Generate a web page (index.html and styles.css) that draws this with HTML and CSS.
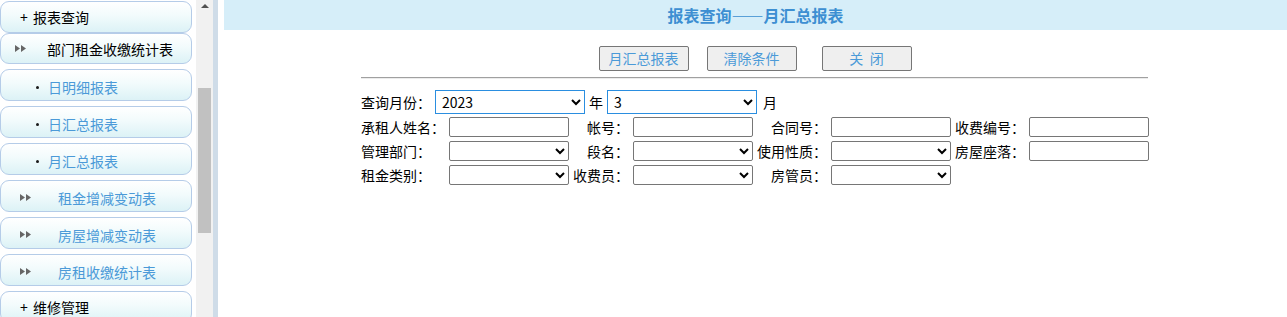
FILE: index.html
```html
<!DOCTYPE html>
<html lang="zh-CN">

<head>
    <meta charset="UTF-8">
    <title>报表查询——月汇总报表</title>
    <link rel="stylesheet" href="styles.css">
</head>

<body>
    <!-- menu laterale -->
    <div class="side-frame">
        <ul class="menu">
            <li class="menu-item top"><span class="plus">+</span>报表查询</li>
            <li class="menu-item group">
                <svg class="arrows" width="11" height="7" viewBox="0 0 11 7"><path d="M0 0L5 3.5L0 7Z M6 0L11 3.5L6 7Z" fill="#666"/></svg>
                <span class="group-text">部门租金收缴统计表</span>
            </li>
            <li class="menu-item leaf"><span class="dot"></span>日明细报表</li>
            <li class="menu-item leaf"><span class="dot"></span>日汇总报表</li>
            <li class="menu-item leaf"><span class="dot"></span>月汇总报表</li>
            <li class="menu-item group blue">
                <svg class="arrows" width="11" height="7" viewBox="0 0 11 7"><path d="M0 0L5 3.5L0 7Z M6 0L11 3.5L6 7Z" fill="#666"/></svg>
                <span class="group-text">租金增减变动表</span>
            </li>
            <li class="menu-item group blue">
                <svg class="arrows" width="11" height="7" viewBox="0 0 11 7"><path d="M0 0L5 3.5L0 7Z M6 0L11 3.5L6 7Z" fill="#666"/></svg>
                <span class="group-text">房屋增减变动表</span>
            </li>
            <li class="menu-item group blue">
                <svg class="arrows" width="11" height="7" viewBox="0 0 11 7"><path d="M0 0L5 3.5L0 7Z M6 0L11 3.5L6 7Z" fill="#666"/></svg>
                <span class="group-text">房租收缴统计表</span>
            </li>
            <li class="menu-item top"><span class="plus">+</span>维修管理</li>
        </ul>
        <div class="scrollbar">
            <span class="arrow-up"></span>
            <span class="thumb"></span>
        </div>
    </div>
    <div class="divider"></div>

    <!-- contenuto -->
    <div class="content">
        <div class="title-bar">报表查询——月汇总报表</div>

        <div class="buttons">
            <button class="btn btn-report">月汇总报表</button>
            <button class="btn btn-clear">清除条件</button>
            <button class="btn">关&nbsp;&nbsp;闭</button>
        </div>

        <div class="form">
            <hr class="line">

            <div class="query-row">
                <span>查询月份：</span>
                <select class="month-sel">
                    <option>2023</option>
                </select>
                <span>年</span>
                <select class="month-sel">
                    <option>3</option>
                </select>
                <span class="unit">月</span>
            </div>

            <div class="grid">
                <span class="lbl first">承租人姓名：</span>
                <input type="text" class="field">
                <span class="lbl">帐号：</span>
                <input type="text" class="field">
                <span class="lbl">合同号：</span>
                <input type="text" class="field">
                <span class="lbl">收费编号：</span>
                <input type="text" class="field">

                <span class="lbl first">管理部门：</span>
                <select class="field"><option></option></select>
                <span class="lbl">段名：</span>
                <select class="field"><option></option></select>
                <span class="lbl">使用性质：</span>
                <select class="field"><option></option></select>
                <span class="lbl">房屋座落：</span>
                <input type="text" class="field">

                <span class="lbl first">租金类别：</span>
                <select class="field"><option></option></select>
                <span class="lbl">收费员：</span>
                <select class="field"><option></option></select>
                <span class="lbl">房管员：</span>
                <select class="field"><option></option></select>
            </div>
        </div>
    </div>
</body>

</html>
```

FILE: styles.css
```css
/* generale */
html,
body {
    height: 100%;
}

body {
    margin: 0;
    display: flex;
    font-family: "Noto Sans CJK SC", "Microsoft YaHei", sans-serif;
    font-size: 14px;
    color: #000;
    background: #fff;
    overflow: hidden;
}

/* menu a sinistra */
.side-frame {
    width: 213px;
    height: 100%;
    display: flex;
    flex-shrink: 0;
    overflow: hidden;
}

.menu {
    list-style: none;
    margin: 0;
    padding: 1px 0 0 0;
    width: 196px;
}

.menu-item {
    box-sizing: border-box;
    width: 192px;
    height: 32px;
    margin-bottom: 5px;
    display: flex;
    align-items: center;
    border: 1px solid #b5cce8;
    border-radius: 9px;
    background: linear-gradient(to bottom, #ffffff 0%, #f2fbfc 45%, #dcf2f6 100%);
    line-height: 16px;
    white-space: nowrap;
}

.menu-item.top {
    margin-bottom: 0;
    padding-left: 19px;
}

.plus {
    width: 13px;
}

.menu-item.group {
    height: 31px;
    padding-left: 14px;
}

.menu-item.group .group-text {
    margin-left: 21px;
}

.menu-item.blue {
    height: 32px;
    padding-left: 19px;
    padding-top: 3px;
    color: #4b9ad8;
}

.menu-item.blue .group-text {
    margin-left: 27px;
}

.menu-item.leaf {
    padding-left: 35px;
    padding-top: 3px;
    color: #4b9ad8;
}

.dot {
    width: 3px;
    height: 3px;
    border-radius: 50%;
    background: #1a1a1a;
    margin-right: 9px;
    margin-top: 1px;
}

/* barra di scorrimento finta */
.scrollbar {
    width: 17px;
    height: 100%;
    background: #f1f1f1;
    display: flex;
    flex-direction: column;
    align-items: center;
}

.arrow-up {
    margin-top: 4px;
    width: 0;
    height: 0;
    border-left: 4px solid transparent;
    border-right: 4px solid transparent;
    border-bottom: 4px solid #505050;
}

.thumb {
    margin-top: 80px;
    width: 13px;
    height: 145px;
    background: #c1c1c1;
}

.divider {
    width: 5px;
    flex-shrink: 0;
    background: #cfdce8;
}

/* parte destra */
.content {
    flex: 1;
    margin-left: 6px;
}

.title-bar {
    height: 30px;
    line-height: 30px;
    background: #d6eef9;
    color: #3d8fd2;
    font-size: 16px;
    font-weight: bold;
    text-align: center;
}

.buttons {
    display: flex;
    justify-content: center;
    margin-top: 16px;
    padding-right: 1px;
}

.btn {
    box-sizing: border-box;
    width: 90px;
    height: 25px;
    padding: 0;
    border: 1px solid #767676;
    border-radius: 2px;
    background: #efefef;
    color: #4b9ad8;
    font-family: inherit;
    font-size: 14px;
    line-height: 21px;
}

.btn-report {
    margin-right: 18px;
}

.btn-clear {
    margin-right: 25px;
}

.form {
    width: 787px;
    margin: 0 0 0 137px;
}

.line {
    margin: 6px 0 0 0;
    height: 0;
    border: none;
    border-top: 1px solid #a0a0a0;
    border-bottom: 1px solid #ececec;
}

.query-row {
    display: flex;
    align-items: center;
    gap: 4px;
    height: 24px;
    margin-top: 11px;
    white-space: nowrap;
}

.month-sel {
    box-sizing: border-box;
    width: 150px;
    height: 24px;
    border: 1px solid #2a8ee0;
    border-radius: 0;
    font-family: inherit;
    font-size: 14px;
    padding: 0 2px;
    background: #fff;
}

.unit {
    margin-left: 2px;
}

.grid {
    display: grid;
    grid-template-columns: 88px 124px 60px 124px 74px 124px 74px 119px;
    grid-auto-rows: 24px;
    align-items: center;
    margin-top: 1px;
}

.lbl {
    text-align: right;
    padding-right: 4px;
    white-space: nowrap;
    line-height: 16px;
}

.lbl.first {
    text-align: left;
}

.field {
    box-sizing: border-box;
    width: 120px;
    height: 20px;
    border: 1px solid #767676;
    border-radius: 2px;
    padding: 0 2px;
    background: #fff;
    font-family: inherit;
    font-size: 14px;
}
```
